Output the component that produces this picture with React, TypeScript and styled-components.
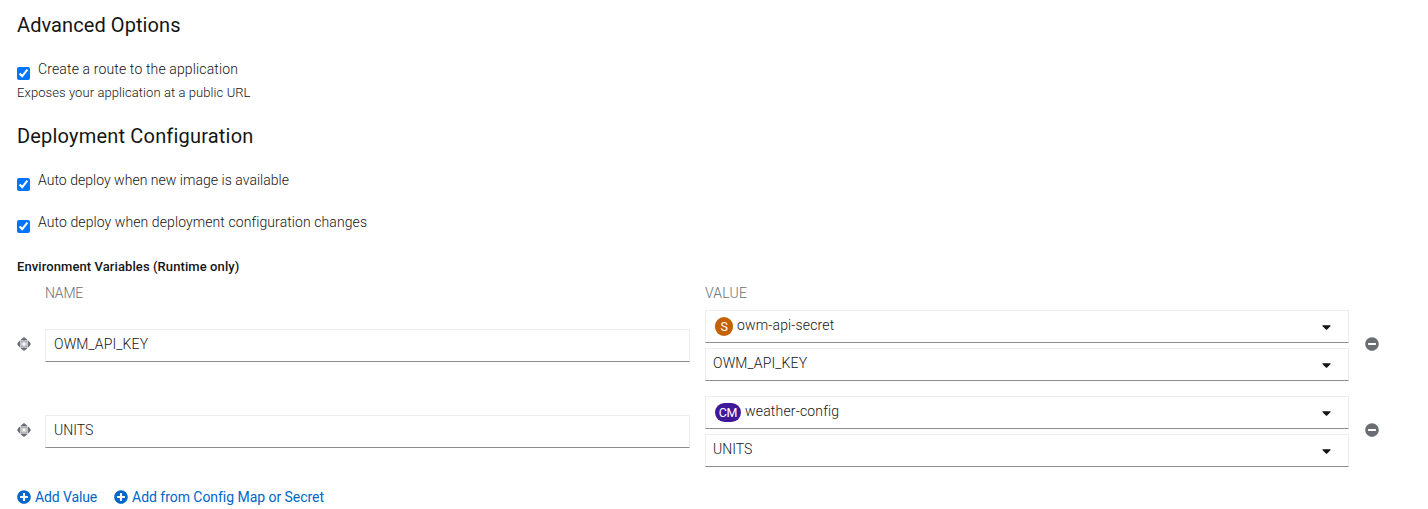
import React from "react";
import styled, { createGlobalStyle } from "styled-components";
import { FaCaretDown, FaMinusCircle, FaPlusCircle } from "react-icons/fa";

const GlobalStyle = createGlobalStyle`
  *, *::before, *::after { box-sizing: border-box; }
  body {
    margin: 0;
    background: #fff;
    color: #151515;
    font-family: Roboto, "Liberation Sans", sans-serif;
    font-size: 14px;
    font-weight: 300;
    line-height: 20px;
  }
`;

const Page = styled.main`
  display: flex;
  flex-direction: column;
  width: 1428px;
  height: 509px;
  padding: 12px 17px 0;
  overflow: hidden;
`;

const Text = styled.span<{ $track?: number }>`
  letter-spacing: ${(p) => p.$track ?? 0}px;
  white-space: nowrap;
`;

const Heading = styled.h2`
  margin: 0;
  height: 26px;
  font-size: 20px;
  font-weight: 400;
  line-height: 26px;
`;

const Section = styled.section`
  display: flex;
  flex-direction: column;
  height: 111px;
`;

const DeploymentSection = styled(Section)`
  height: 124px;
`;

const Checks = styled.div`
  display: flex;
  flex-direction: column;
  gap: 22px;
  padding-top: 21px;
`;

const CheckLabel = styled.label`
  display: flex;
  gap: 8px;
  height: 20px;

  input {
    width: 13px;
    height: 13px;
    margin: 8px 0 0;
  }
`;

const Helper = styled.p`
  margin: 4px 0 0;
  font-size: 13px;
  line-height: 20px;
`;

const EnvTitle = styled.h3`
  margin: 10px 0 0;
  font-size: 13px;
  font-weight: 500;
  line-height: 20px;
`;

const Grid = styled.div`
  display: grid;
  grid-template-columns: 28px 645px 15px 644px 16px 14px;
  align-items: center;
`;

const HeaderRow = styled(Grid)`
  height: 20px;
  margin: 6px 0 7px;
  color: #6a6e73;
`;

const EnvRow = styled(Grid)`
  height: 71px;
  margin-bottom: 15px;

  > svg {
    margin-bottom: 3px;
    color: #6a6e73;
  }
`;

const NameInput = styled.div`
  display: flex;
  grid-column: 2;
  height: 33px;
  padding: 4px 8px 0;
  border: 1px solid #ededed;
  border-bottom-color: #8a8d90;
`;

const Selects = styled.div`
  display: flex;
  flex-direction: column;
  grid-column: 4;
  gap: 5px;
`;

const Select = styled.div<{ $resource?: boolean }>`
  display: flex;
  align-items: flex-start;
  height: 33px;
  padding: 4px 17px 0 ${(p) => (p.$resource ? 9 : 7)}px;
  border: 1px solid #ededed;
  border-bottom-color: #8a8d90;

  > svg {
    width: 9px;
    height: 14px;
    margin: 5px 0 0 auto;
  }
`;

const Badge = styled.span<{ $color: string; $width: number }>`
  flex: none;
  width: ${(p) => p.$width}px;
  height: 19px;
  margin: 2px 4px 0 0;
  border-radius: 10px;
  background: ${(p) => p.$color};
  color: #fff;
  font-size: 12.5px;
  font-weight: 400;
  letter-spacing: -0.3px;
  line-height: 19px;
  text-align: center;
`;

const Remove = styled(FaMinusCircle)`
  grid-column: 6;
  width: 14px;
  height: 14px;
`;

const Actions = styled.div`
  display: flex;
  gap: 17px;
  padding-top: 5px;
`;

const Action = styled.a`
  display: flex;
  align-items: center;
  gap: 4px;
  color: #06c;
  font-weight: 400;

  svg {
    width: 14px;
    height: 14px;
  }
`;

const MoveIcon = () => (
  <svg width="14" height="14" viewBox="0 0 14 14" fill="currentColor">
    <path d="M7 0 10.2 2.4V3.4H3.8V2.4ZM7 14 3.8 11.6V10.6H10.2V11.6ZM0 7 2.4 3.8H3.4V10.2H2.4ZM14 7 11.6 10.2H10.6V3.8H11.6Z" />
    <path d="M4.2 4.2h1.5v1.3H4.2zM6.4 4.2h1.2v1.3H6.4zM8.3 4.2h1.5v1.3H8.3zM4.2 6.4h1.3v1.2H4.2zM8.5 6.4h1.3v1.2H8.5zM4.2 8.5h1.5v1.3H4.2zM6.4 8.5h1.2v1.3H6.4zM8.3 8.5h1.5v1.3H8.3z" />
  </svg>
);

type Check = { label: string; track: number };

const CheckList = ({ items }: { items: Check[] }) => (
  <Checks>
    {items.map((c) => (
      <CheckLabel key={c.label}>
        <input type="checkbox" defaultChecked />
        <Text $track={c.track}>{c.label}</Text>
      </CheckLabel>
    ))}
  </Checks>
);

const variables = [
  { name: "OWM_API_KEY", track: 0.15, source: "owm-api-secret", sourceTrack: 0.16, badge: "S", color: "#c46100", width: 18 },
  { name: "UNITS", track: 0, source: "weather-config", sourceTrack: 0.18, badge: "CM", color: "#40199a", width: 26 },
];

export default function App() {
  return (
    <>
      <GlobalStyle />
      <Page>
        <Section>
          <Heading><Text $track={0.08}>Advanced Options</Text></Heading>
          <CheckList items={[{ label: "Create a route to the application", track: 0.14 }]} />
          <Helper><Text $track={0.08}>Exposes your application at a public URL</Text></Helper>
        </Section>
        <DeploymentSection>
          <Heading><Text $track={0.19}>Deployment Configuration</Text></Heading>
          <CheckList
            items={[
              { label: "Auto deploy when new image is available", track: 0.03 },
              { label: "Auto deploy when deployment configuration changes", track: 0.09 },
            ]}
          />
        </DeploymentSection>
        <EnvTitle><Text $track={0.09}>Environment Variables (Runtime only)</Text></EnvTitle>
        <HeaderRow>
          <span />
          <Text $track={-0.2}>NAME</Text>
          <span />
          <Text $track={0.2}>VALUE</Text>
        </HeaderRow>
        {variables.map((v) => (
          <EnvRow key={v.name}>
            <MoveIcon />
            <NameInput><Text $track={v.track}>{v.name}</Text></NameInput>
            <Selects>
              <Select $resource>
                <Badge $color={v.color} $width={v.width}>{v.badge}</Badge>
                <Text $track={v.sourceTrack}>{v.source}</Text>
                <FaCaretDown />
              </Select>
              <Select>
                <Text $track={v.track}>{v.name}</Text>
                <FaCaretDown />
              </Select>
            </Selects>
            <Remove />
          </EnvRow>
        ))}
        <Actions>
          <Action><FaPlusCircle /><Text $track={-0.12}>Add Value</Text></Action>
          <Action><FaPlusCircle /><Text $track={-0.04}>Add from Config Map or Secret</Text></Action>
        </Actions>
      </Page>
    </>
  );
}
